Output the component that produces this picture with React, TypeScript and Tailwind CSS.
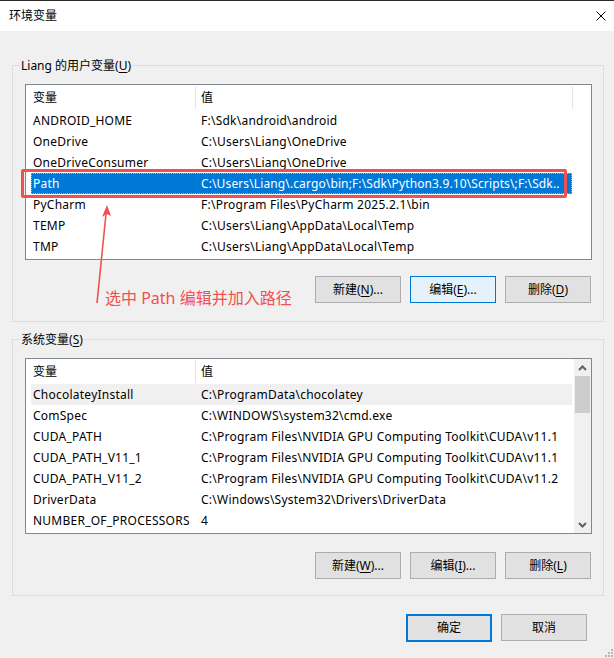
import React from "react";

type Row = { name: string; value: string; tight?: boolean };

const userVars: Row[] = [
  { name: "ANDROID_HOME", value: "F:\\Sdk\\android\\android" },
  { name: "OneDrive", value: "C:\\Users\\Liang\\OneDrive" },
  { name: "OneDriveConsumer", value: "C:\\Users\\Liang\\OneDrive" },
  { name: "Path", value: "C:\\Users\\Liang\\.cargo\\bin;F:\\Sdk\\Python3.9.10\\Scripts\\;F:\\Sdk..", tight: true },
  { name: "PyCharm", value: "F:\\Program Files\\PyCharm 2025.2.1\\bin" },
  { name: "TEMP", value: "C:\\Users\\Liang\\AppData\\Local\\Temp" },
  { name: "TMP", value: "C:\\Users\\Liang\\AppData\\Local\\Temp" },
];

const sysVars: Row[] = [
  { name: "ChocolateyInstall", value: "C:\\ProgramData\\chocolatey" },
  { name: "ComSpec", value: "C:\\WINDOWS\\system32\\cmd.exe" },
  { name: "CUDA_PATH", value: "C:\\Program Files\\NVIDIA GPU Computing Toolkit\\CUDA\\v11.1" },
  { name: "CUDA_PATH_V11_1", value: "C:\\Program Files\\NVIDIA GPU Computing Toolkit\\CUDA\\v11.1" },
  { name: "CUDA_PATH_V11_2", value: "C:\\Program Files\\NVIDIA GPU Computing Toolkit\\CUDA\\v11.2" },
  { name: "DriverData", value: "C:\\Windows\\System32\\Drivers\\DriverData" },
  { name: "NUMBER_OF_PROCESSORS", value: "4" },
];

interface BtnProps {
  pre: string;
  k?: string;
  post?: string;
  kind?: "normal" | "hover" | "default";
}

const Btn = ({ pre, k, post, kind = "normal" }: BtnProps) => {
  const cls =
    kind === "hover"
      ? "border border-[#0078d7] bg-[#e5f1fb]"
      : kind === "default"
      ? "border-2 border-[#0078d7] bg-[#e1e1e1]"
      : "border border-[#adadad] bg-[#e1e1e1]";
  return (
    <div className={`w-[86px] flex items-center justify-center leading-[16px] ${cls} ${kind === "default" ? "h-[28px]" : "h-[27px]"}`}>
      <span>
        {pre}
        {k && <span className="underline underline-offset-2">{k}</span>}
        {post}
      </span>
    </div>
  );
};

const Chevron = ({ up }: { up?: boolean }) => (
  <svg width="9" height="6" viewBox="0 0 9 6">
    <polyline
      points={up ? "1,5 4.5,1.5 8,5" : "1,1 4.5,4.5 8,1"}
      fill="none"
      stroke="#606060"
      strokeWidth="2"
    />
  </svg>
);

const ListView = ({ rows, selected, hot, scroll }: { rows: Row[]; selected?: number; hot?: number; scroll?: boolean }) => (
  <div className="h-[176px] border border-[#828790] bg-white flex">
    <div className="w-[548px] flex flex-col">
      <div className="h-[25px] flex items-center leading-[16px]">
        <div className="w-[169px] pl-[7px]">变量</div>
        <div className="w-px h-[23px] bg-[#e5e5e5]" />
        <div className="w-[376px] pl-[5px]">值</div>
        {!scroll && <div className="w-px h-[23px] bg-[#e5e5e5]" />}
      </div>
      {rows.map((r, i) => {
        const isSel = i === selected;
        const isHot = i === hot;
        return (
          <div
            key={r.name}
            className={`ml-[5px] w-[541px] h-[21px] flex items-center leading-[16px] whitespace-nowrap tracking-[0.24px] ${
              isSel ? "bg-[#0078d7] text-white outline outline-1 outline-dotted outline-[#f5a33c] -outline-offset-1" : isHot ? "bg-[#f0f0f0]" : ""
            }`}
          >
            <div className="w-[164px] pl-[2px] overflow-hidden">{r.name}</div>
            <div className={`flex-1 pl-[6px] overflow-hidden ${r.tight ? "tracking-[0.12px]" : ""}`}>{r.value}</div>
          </div>
        );
      })}
    </div>
    {scroll && (
      <div className="w-[17px] bg-[#f0f0f0] flex flex-col">
        <div className="h-[17px] flex items-center justify-center">
          <Chevron up />
        </div>
        <div className="mx-px h-[37px] bg-[#cdcdcd]" />
        <div className="flex-1" />
        <div className="h-[17px] flex items-center justify-center">
          <Chevron />
        </div>
      </div>
    )}
  </div>
);

const Group = ({ label, k, children, className }: { label: string; k: string; children: React.ReactNode; className?: string }) => (
  <div className={`relative border border-[#dcdcdc] pt-[18px] pl-[12px] pr-[11px] ${className ?? ""}`}>
    <div className="absolute top-[-8px] left-[7px] px-px bg-[#f0f0f0] leading-[16px]">
      {label}(<span className="underline underline-offset-2">{k}</span>)
    </div>
    {children}
  </div>
);

export default function App() {
  return (
    <div className="relative w-[614px] h-[658px] overflow-hidden bg-[#f0f0f0] text-[12px] text-black font-[family-name:'Noto_Sans','Noto_Sans_CJK_SC',sans-serif]">
      {/* title bar */}
      <div className="h-[31px] bg-white border-t border-[#2b2b2b] flex items-center justify-between pl-[9px] pr-[8px]">
        <span className="leading-[16px]">环境变量</span>
        <svg width="10" height="10" viewBox="0 0 10 10">
          <path d="M0.5 0.5 L9.5 9.5 M9.5 0.5 L0.5 9.5" stroke="#000" strokeWidth="1" />
        </svg>
      </div>

      <div className="pl-[12px] pr-[10px] pt-[34px]">
        <Group label="Liang 的用户变量" k="U" className="pb-[18px]">
          <ListView rows={userVars} selected={3} />
          <div className="mt-[16px] flex justify-end gap-[9px] pr-px">
            <Btn pre="新建(" k="N" post=")..." />
            <Btn pre="编辑(" k="E" post=")..." kind="hover" />
            <Btn pre="删除(" k="D" post=")" />
          </div>
        </Group>

        <Group label="系统变量" k="S" className="mt-[17px] pb-[16px]">
          <ListView rows={sysVars} hot={0} scroll />
          <div className="mt-[18px] flex justify-end gap-[9px] pr-px">
            <Btn pre="新建(" k="W" post=")..." />
            <Btn pre="编辑(" k="I" post=")..." />
            <Btn pre="删除(" k="L" post=")" />
          </div>
        </Group>

        <div className="mt-[18px] flex justify-end gap-[9px] pr-[17px]">
          <Btn pre="确定" kind="default" />
          <Btn pre="取消" />
        </div>
      </div>

      {/* annotation overlay */}
      <div className="absolute left-[21px] top-[169px] w-[546px] h-[29px] border-[3px] border-[#f0504f] rounded-[2px]" />
      <svg className="absolute left-0 top-0" width="614" height="658">
        <line x1="97" y1="303" x2="106" y2="214" stroke="#f0504f" strokeWidth="1.6" />
        <polygon points="107,205 102,217 106.5,214 111,216" fill="#f0504f" />
      </svg>
      <div className="absolute left-[105px] top-[287px] text-[16px] leading-[22px] text-[#f0504f] whitespace-nowrap">
        选中 Path 编辑并加入路径
      </div>

      {/* size grip */}
      <svg className="absolute right-[1px] bottom-[1px]" width="9" height="9" viewBox="0 0 9 9">
        <rect x="7" y="1" width="2" height="2" fill="#b5b5b5" />
        <rect x="4" y="4" width="2" height="2" fill="#b5b5b5" />
        <rect x="7" y="4" width="2" height="2" fill="#b5b5b5" />
        <rect x="1" y="7" width="2" height="2" fill="#b5b5b5" />
        <rect x="4" y="7" width="2" height="2" fill="#b5b5b5" />
        <rect x="7" y="7" width="2" height="2" fill="#b5b5b5" />
      </svg>
    </div>
  );
}
